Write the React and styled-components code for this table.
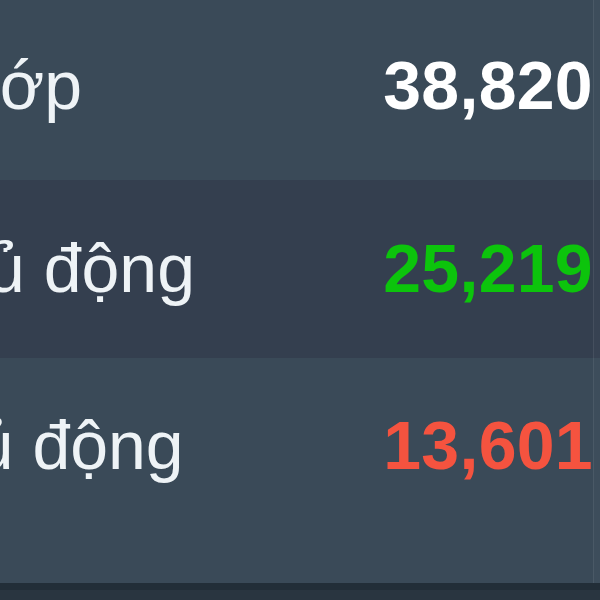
import React from "react";
import styled, { createGlobalStyle } from "styled-components";

const Global = createGlobalStyle`
  html, body {
    margin: 0;
    padding: 0;
    background: #3a4a58;
    overflow: hidden;
  }
  #root {
    width: 600px;
    height: 600px;
    overflow: hidden;
  }
`;

const Panel = styled.div`
  width: 600px;
  height: 600px;
  display: flex;
  flex-direction: column;
  overflow: hidden;
  background: #3a4a58;
`;

const Table = styled.div`
  margin-left: -236px;
  width: 836px;
  display: flex;
  flex-direction: column;
  flex: 1;
`;

const Row = styled.div`
  display: flex;
  align-items: flex-start;
  height: ${(p) => p.h}px;
  flex: ${(p) => (p.last ? 1 : "none")};
  background: ${(p) => (p.alt ? "#343f4f" : "#3a4a58")};
  font-family: "Liberation Sans", Arial, sans-serif;
  font-size: 68px;
  line-height: 80px;
  padding-top: ${(p) => p.pt}px;
  box-sizing: border-box;
`;

const Label = styled.div`
  flex: 1;
  color: #eef3f6;
  white-space: nowrap;
  margin-left: ${(p) => p.shift || 0}px;
`;

const Value = styled.div`
  font-weight: bold;
  color: ${(p) => p.color};
  white-space: nowrap;
  padding-right: 0;
  letter-spacing: 0.3px;
`;

const NextCell = styled.div`
  align-self: stretch;
  width: 6px;
  margin-top: -${(p) => p.pt}px;
  border-left: 1px solid rgba(255, 255, 255, 0.07);
  background: rgba(255, 255, 255, 0.02);
`;

const Footer = styled.div`
  height: 17px;
  flex: none;
  background: #293540;
  border-top: 7px solid #222e38;
  box-sizing: border-box;
`;

const rows = [
  { label: "Tổng khớp", value: "38,820", color: "#ffffff", h: 180, pt: 45, shift: -10 },
  { label: "Mua chủ động", value: "25,219", color: "#0cc40c", h: 178, pt: 48, alt: true },
  { label: "Bán chủ động", value: "13,601", color: "#f5533f", h: 225, pt: 47 },
];

export default function App() {
  return (
    <Panel>
      <Global />
      <Table>
        {rows.map((r, i) => (
          <Row key={r.label} h={r.h} pt={r.pt} alt={r.alt} last={i === rows.length - 1}>
            <Label shift={r.shift}>{r.label}</Label>
            <Value color={r.color}>{r.value}</Value>
            <NextCell pt={r.pt} />
          </Row>
        ))}
      </Table>
      <Footer />
    </Panel>
  );
}
